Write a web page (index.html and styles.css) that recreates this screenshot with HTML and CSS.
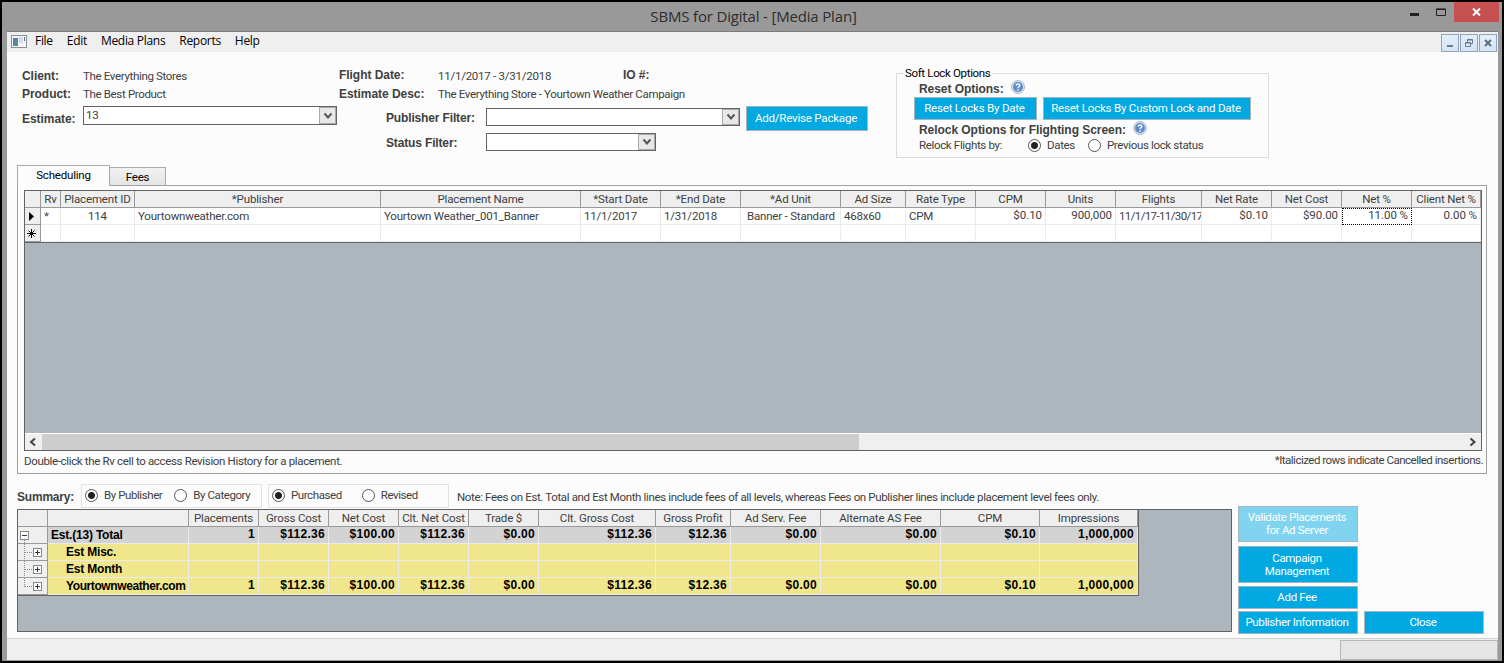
FILE: index.html
```html
<!DOCTYPE html>
<html lang="en">
<head>
  <meta charset="UTF-8" />
  <title>SBMS for Digital - [Media Plan]</title>
  <link rel="stylesheet" href="styles.css">
</head>
<body>
  <div class="window">
    <div class="titlebar">
      <div class="title">SBMS for Digital - [Media Plan]</div>
      <div class="win-buttons">
        <svg class="win-min" width="9" height="3"><rect width="9" height="3" fill="#222"/></svg>
        <svg class="win-max" width="10" height="8"><path d="M.5 1.500h9v6h-9zM0 .9h10" fill="none" stroke="#222"/></svg>
        <div class="win-close"><svg width="9" height="8"><path d="M1 .5l7 7M8 .5l-7 7" stroke="#fff" stroke-width="2"/></svg></div>
      </div>
    </div>

    <div class="menubar">
      <svg class="app-icon" width="16" height="13">
        <rect x=".5" y=".5" width="15" height="12" fill="#f4f6f8" stroke="#8a8f96"/>
        <rect x="2" y="3" width="5" height="8" fill="#4f8f8c"/>
        <rect x="2" y="3" width="5" height="3" fill="#5b7fae"/>
        <rect x="8" y="2" width="4" height="6" fill="#d5dade"/>
        <rect x="13" y="2" width="1" height="4" fill="#4a7a9c"/>
      </svg>
      <span>File</span><span>Edit</span><span>Media Plans</span><span>Reports</span><span>Help</span>
      <div class="mdi-buttons">
        <i><svg width="16" height="16"><path d="M5 11h6" stroke="#6b7c90" stroke-width="2"/></svg></i>
        <i><svg width="16" height="16"><path d="M6.500 7V4.500h5v4H9M6 5h6M4.500 7.500h5v4h-5zM4 8h6" fill="none" stroke="#6b7c90"/></svg></i>
        <i><svg width="16" height="16"><path d="M5 5l6 6M11 5l-6 6" stroke="#5f6d7e" stroke-width="2"/></svg></i>
      </div>
    </div>

    <div class="content">
      <div class="header">
        <div class="client">
          <div class="field"><b>Client:</b><span>The Everything Stores</span></div>
          <div class="field"><b>Product:</b><span>The Best Product</span></div>
          <div class="field estimate"><b>Estimate:</b>
            <div class="combo wide"><span>13</span><em><svg width="10" height="8"><path d="M1.500 1.500l3.500 4 3.500-4" fill="none" stroke="#555" stroke-width="2"/></svg></em></div>
          </div>
        </div>

        <div class="flight">
          <div class="field"><b>Flight Date:</b><span class="dates">11/1/2017 - 3/31/2018</span><b>IO #:</b></div>
          <div class="field"><b>Estimate Desc:</b><span>The Everything Store - Yourtown Weather Campaign</span></div>
          <div class="filter publisher"><b>Publisher Filter:</b>
            <div class="combo wide"><em><svg width="10" height="8"><path d="M1.500 1.500l3.500 4 3.500-4" fill="none" stroke="#555" stroke-width="2"/></svg></em></div>
            <button>Add/Revise Package</button>
          </div>
          <div class="filter"><b>Status Filter:</b>
            <div class="combo"><em><svg width="10" height="8"><path d="M1.500 1.500l3.500 4 3.500-4" fill="none" stroke="#555" stroke-width="2"/></svg></em></div>
          </div>
        </div>

        <fieldset class="softlock">
          <legend>Soft Lock Options</legend>
          <div class="lock-title"><b>Reset Options:</b>
            <svg width="14" height="14"><circle cx="7" cy="7" r="6.500" fill="#d5e0ee" stroke="#a9bcd4"/><circle cx="7" cy="7" r="5" fill="#5c8bc6"/><path d="M5.200 5.700c0-2.300 3.600-2.300 3.600-.2 0 1.300-1.800 1.200-1.800 2.700M7 9.300v1.400" fill="none" stroke="#fff" stroke-width="1.400"/></svg>
          </div>
          <div class="lock-buttons"><button>Reset Locks By Date</button><button>Reset Locks By Custom Lock and Date</button></div>
          <div class="lock-title second"><b>Relock Options for Flighting Screen:</b>
            <svg width="14" height="14"><circle cx="7" cy="7" r="6.500" fill="#d5e0ee" stroke="#a9bcd4"/><circle cx="7" cy="7" r="5" fill="#5c8bc6"/><path d="M5.200 5.700c0-2.300 3.600-2.300 3.600-.2 0 1.300-1.800 1.200-1.800 2.700M7 9.300v1.400" fill="none" stroke="#fff" stroke-width="1.400"/></svg>
          </div>
          <div class="relock"><span>Relock Flights by:</span><i class="radio on"></i><span>Dates</span><i class="radio"></i><span>Previous lock status</span></div>
        </fieldset>
      </div>

      <div class="tabs"><div class="tab active">Scheduling</div><div class="tab">Fees</div></div>
      <div class="panel">
        <div class="schedule">
          <div class="row head"><div></div><div>Rv</div><div>Placement ID</div><div>*Publisher</div><div>Placement Name</div><div>*Start Date</div><div>*End Date</div><div>*Ad Unit</div><div>Ad Size</div><div>Rate Type</div><div>CPM</div><div>Units</div><div>Flights</div><div>Net Rate</div><div>Net Cost</div><div>Net %</div><div>Client Net %</div></div>
          <div class="row">
            <div class="sel"><svg width="6" height="9"><path d="M0 0l5 4.500-5 4.500z"/></svg></div>
            <div>*</div><div class="center">114</div><div>Yourtownweather.com</div><div>Yourtown Weather_001_Banner</div><div>11/1/2017</div><div>1/31/2018</div><div class="unit">Banner - Standard</div><div>468x60</div><div>CPM</div><div class="num">$0.10</div><div class="num">900,000</div><div class="dates-cell">11/1/17-11/30/17</div><div class="num">$0.10</div><div class="num">$90.00</div><div class="num focus">11.00 %</div><div class="num">0.00 %</div>
          </div>
          <div class="row">
            <div class="sel"><svg width="9" height="9"><path d="M4.500 0v9M0 4.500h9M1.500 1.500l6 6M7.500 1.500l-6 6" stroke="#000"/></svg></div>
            <div></div><div></div><div></div><div></div><div></div><div></div><div></div><div></div><div></div><div></div><div></div><div></div><div></div><div></div><div></div><div></div>
          </div>
          <div class="scrollbar">
            <svg width="17" height="16"><path d="M10 4.500l-4 3.500 4 3.500" fill="none" stroke="#444" stroke-width="2"/></svg>
            <div class="thumb"></div>
            <svg class="right" width="17" height="16"><path d="M6.500 4.500l4 3.500-4 3.500" fill="none" stroke="#444" stroke-width="2"/></svg>
          </div>
        </div>
        <div class="hints"><span>Double-click the Rv cell to access Revision History for a placement.</span><span class="hint-right">*Italicized rows indicate Cancelled insertions.</span></div>
      </div>

      <div class="summary-bar">
        <b>Summary:</b>
        <div class="choice"><i class="radio on"></i><span>By Publisher</span><i class="radio"></i><span>By Category</span></div>
        <div class="choice second"><i class="radio on"></i><span>Purchased</span><i class="radio"></i><span>Revised</span></div>
        <span class="note">Note: Fees on Est. Total and Est Month lines include fees of all levels, whereas Fees on Publisher lines include placement level fees only.</span>
      </div>

      <div class="bottom">
        <div class="summary">
          <div class="sum-grid">
            <div class="row head"><div></div><div></div><div>Placements</div><div>Gross Cost</div><div>Net Cost</div><div>Clt. Net Cost</div><div>Trade $</div><div>Clt. Gross Cost</div><div>Gross Profit</div><div>Ad Serv. Fee</div><div>Alternate AS Fee</div><div>CPM</div><div>Impressions</div></div>
            <div class="row total"><div class="tree"><svg width="29" height="17"><path d="M6.500 13v4" stroke="#888" stroke-dasharray="1 1"/><rect x="2.500" y="4.500" width="8" height="8" fill="#fff" stroke="#888"/><path d="M4 8.500h5" stroke="#335"/></svg></div><div class="name">Est.(13) Total</div><div>1</div><div>$112.36</div><div>$100.00</div><div>$112.36</div><div>$0.00</div><div>$112.36</div><div>$12.36</div><div>$0.00</div><div>$0.00</div><div>$0.10</div><div>1,000,000</div></div>
            <div class="row"><div class="tree"><svg width="29" height="17"><path d="M6.500 0v17M7 8.500h8" fill="none" stroke="#888" stroke-dasharray="1 1"/><rect x="15.500" y="4.500" width="8" height="8" fill="#fff" stroke="#888"/><path d="M17 8.500h5M19.500 6v5" stroke="#335"/></svg></div><div class="name">Est Misc.</div><div></div><div></div><div></div><div></div><div></div><div></div><div></div><div></div><div></div><div></div><div></div></div>
            <div class="row"><div class="tree"><svg width="29" height="17"><path d="M6.500 0v17M7 8.500h8" fill="none" stroke="#888" stroke-dasharray="1 1"/><rect x="15.500" y="4.500" width="8" height="8" fill="#fff" stroke="#888"/><path d="M17 8.500h5M19.500 6v5" stroke="#335"/></svg></div><div class="name">Est Month</div><div></div><div></div><div></div><div></div><div></div><div></div><div></div><div></div><div></div><div></div><div></div></div>
            <div class="row"><div class="tree"><svg width="29" height="17"><path d="M6.500 0v9M7 8.500h8" fill="none" stroke="#888" stroke-dasharray="1 1"/><rect x="15.500" y="4.500" width="8" height="8" fill="#fff" stroke="#888"/><path d="M17 8.500h5M19.500 6v5" stroke="#335"/></svg></div><div class="name site">Yourtownweather.com</div><div>1</div><div>$112.36</div><div>$100.00</div><div>$112.36</div><div>$0.00</div><div>$112.36</div><div>$12.36</div><div>$0.00</div><div>$0.00</div><div>$0.10</div><div>1,000,000</div></div>
          </div>
        </div>
        <div class="actions">
          <button class="validate">Validate Placements<br>for Ad Server</button>
          <button class="campaign">Campaign<br>Management</button>
          <button class="add-fee">Add Fee</button>
          <button>Publisher Information</button>
        </div>
        <button class="close">Close</button>
      </div>
    </div>

    <div class="statusbar"><div class="status-panel"></div></div>
  </div>
</body>
</html>
```
FILE: styles.css
```css
* {
  box-sizing: border-box;
}

body {
  margin: 0;
  width: 1504px;
  height: 663px;
  padding: 2px;
  background: #000;
  overflow: hidden;
  font-family: Roboto, "Liberation Sans", sans-serif;
  font-size: 11.5px;
  line-height: 14px;
  letter-spacing: -0.34px;
  color: #404040;
  white-space: nowrap;
}

svg {
  display: block;
  flex: none;
}

b, .sum-grid .row {
  font-family: "Liberation Sans", sans-serif;
  font-size: 12px;
  font-weight: bold;
  letter-spacing: -0.05px;
}

.window {
  width: 1500px;
  height: 659px;
  padding: 0 4px 1px 5px;
  background: #999;
  display: flex;
  flex-direction: column;
}

.titlebar {
  height: 30px;
  display: flex;
  position: relative;
  justify-content: center;
  border-bottom: 1px solid #7a7a7a;
}

.title {
  padding-left: 2px;
  font: 15px/29px "Open Sans", "Noto Sans", sans-serif;
  letter-spacing: -0.17px;
  color: #2d2d2d;
}

.win-buttons {
  position: absolute;
  right: -1px;
  top: 0;
  display: flex;
}

.win-min {
  margin: 11px 17px 0 0;
}

.win-max {
  margin: 6px 8px 0 0;
}

.win-close {
  width: 45px;
  height: 20px;
  padding: 6px 0 0 18px;
  background: #c75050;
}

.menubar {
  height: 20px;
  background: #efefef;
  display: flex;
  align-items: center;
  padding-left: 4px;
  font: 12px/18px "Open Sans", "Noto Sans", sans-serif;
  letter-spacing: -0.3px;
  color: #000;
}

.app-icon {
  margin: 0 8px 2px 0;
}

.menubar span {
  margin-right: 14px;
  padding-bottom: 2px;
}

.mdi-buttons {
  margin: 1px 1px 0 auto;
  display: flex;
  gap: 1px;
}

.mdi-buttons i {
  width: 18px;
  height: 18px;
  border: 1px solid #8fa3bc;
  background: linear-gradient(#e4eefa, #d3e3f5);
}

.content {
  flex: 1;
  background: #fcfcfc;
  padding-left: 10px;
}

.header {
  display: flex;
  height: 113px;
  padding-left: 4px;
}

.client {
  width: 318px;
  padding-top: 15px;
}

.field {
  display: flex;
  height: 18px;
  line-height: 18px;
}

.client .field b {
  width: 62px;
  padding-left: 1px;
}

.client .estimate {
  height: 19px;
  margin-top: 3px;
}

.estimate b {
  padding-top: 4px;
}

.combo {
  width: 170px;
  height: 18px;
  border: 1px solid #636363;
  background: #fff;
  display: flex;
}

.combo.wide {
  width: 254px;
}

.estimate .combo {
  height: 19px;
  padding-left: 2px;
  line-height: 16px;
  letter-spacing: -0.2px;
}

.combo em {
  width: 17px;
  margin-left: auto;
  border: 1px solid #aaa;
  background: #e8e8e8;
  display: flex;
  align-items: center;
  justify-content: center;
}

.flight {
  width: 557px;
  padding-top: 14px;
}

.flight .field b:first-child {
  width: 99px;
}

.flight .dates {
  width: 185px;
  padding-top: 1px;
  letter-spacing: -0.25px;
}

.flight .field:nth-child(2) {
  padding-top: 1px;
}

.filter {
  display: flex;
  align-items: center;
  height: 25px;
  padding-left: 47px;
}

.filter b {
  width: 100px;
  padding-bottom: 2px;
  letter-spacing: -0.15px;
}

.filter.publisher {
  margin-top: 4px;
}

.filter .combo {
  margin-bottom: 3px;
}

.filter button {
  width: 122px;
  height: 25px;
  margin-left: 6px;
}

button {
  padding: 0 2px 0 0;
  border: 1px solid #a5b5bd;
  background: #00a9e2;
  color: #fff;
  font: inherit;
  line-height: 13px;
  letter-spacing: -0.2px;
}

.softlock {
  width: 373px;
  height: 92px;
  margin: 14px 0 0;
  padding: 0 0 0 17px;
  border: 1px solid #dcdcdc;
}

.softlock legend {
  margin-left: -11px;
  padding: 0 2px;
  color: #000;
}

.lock-title {
  display: flex;
  gap: 7px;
  height: 17px;
  padding-left: 5px;
  line-height: 19px;
}

.lock-title.second {
  line-height: 18px;
  padding-top: 1px;
}

.lock-buttons {
  display: flex;
  gap: 6px;
}

.lock-buttons button {
  width: 123px;
  height: 23px;
}

.lock-buttons button + button {
  width: 208px;
}

.relock {
  display: flex;
  align-items: center;
  padding: 1px 0 0 5px;
}

.relock .radio {
  margin: 0 6px 0 26px;
}

.relock .radio + span + .radio {
  margin-left: 13px;
}

.radio {
  width: 13px;
  height: 13px;
  flex: none;
  border: 1px solid #555;
  border-radius: 50%;
  background: #fff;
}

.radio.on {
  background: radial-gradient(circle, #222 3px, #fff 4px);
}

.tabs {
  display: flex;
  align-items: flex-end;
  height: 20px;
  color: #000;
}

.tab {
  width: 56px;
  height: 18px;
  border: 1px solid #aaa;
  border-width: 1px 1px 0 0;
  background: linear-gradient(#f2f2f2, #e4e4e4);
  text-align: center;
  line-height: 18px;
  letter-spacing: -0.2px;
}

.tab.active {
  position: relative;
  width: 93px;
  height: 21px;
  margin-bottom: -1px;
  border-left-width: 1px;
  background: #fcfcfc;
}

.panel {
  width: 1470px;
  height: 289px;
  border: 1px solid #a0a0a0;
  padding: 4px 0 0 6px;
}

.schedule {
  width: 1458px;
  height: 261px;
  border: 1px solid #636363;
  background: #adb5bd;
  display: flex;
  flex-direction: column;
}

.schedule .row {
  display: grid;
  grid-template-columns: 16px 20px 74px 246px 200px 80px 80px 100px 65px 70px 70px 70px 86px 70px 70px 70px 69px;
  height: 17px;
}

.row > div {
  border-right: 1px solid #ebebeb;
  border-bottom: 1px solid #ebebeb;
  padding: 0 3px;
  overflow: hidden;
}

.schedule .row > div {
  background: #fff;
  line-height: 17px;
  letter-spacing: -0.2px;
}

.schedule .row:nth-child(3) {
  height: 18px;
  border-bottom: 1px solid #636363;
}

.row.head > div, .schedule .row.head > div {
  background: #efefef;
  border-color: #999;
  text-align: center;
  line-height: 17px;
  font-family: Roboto, "Liberation Sans", sans-serif;
  font-size: 11.5px;
  font-weight: normal;
  letter-spacing: -0.15px;
  padding: 0;
}

.schedule .row .sel {
  background: #efefef;
  border-color: #999;
  padding: 4px 0 0 4px;
}

.schedule .sel svg[width="9"] {
  margin-left: -2px;
}

.schedule .row .center {
  text-align: center;
}

.schedule .row .num {
  text-align: right;
  line-height: 15px;
  letter-spacing: -0.05px;
}

.schedule .row .unit {
  padding-left: 6px;
}

.schedule .row .dates-cell {
  padding-right: 0;
  letter-spacing: -0.62px;
}

.schedule .row .focus {
  border: 1px dotted #000;
  line-height: 13px;
}

.scrollbar {
  height: 17px;
  margin-top: auto;
  display: flex;
  background: #efefef;
  border-top: 1px solid #fff;
}

.thumb {
  width: 817px;
  background: #cdcdcd;
}

.scrollbar .right {
  margin-left: auto;
}

.hints {
  display: flex;
  justify-content: space-between;
  padding: 3px 3px 0 0;
}

.hint-right {
  margin-top: -1px;
  letter-spacing: -0.5px;
}

.summary-bar {
  display: flex;
  height: 35px;
  padding-top: 10px;
}

.summary-bar b {
  width: 64px;
  padding-top: 6px;
  letter-spacing: -0.2px;
}

.choice {
  width: 181px;
  height: 24px;
  margin-right: 6px;
  padding: 0 0 2px 3px;
  border: 1px solid #e2e2e2;
  display: flex;
  align-items: center;
  letter-spacing: -0.42px;
}

.choice span {
  margin: 0 12px 0 6px;
}

.choice.second span {
  margin-right: 20px;
}

.note {
  margin: 6px 0 0 2px;
  letter-spacing: -0.36px;
}

.bottom {
  display: flex;
}

.summary {
  width: 1215px;
  height: 123px;
  border: 1px solid #636363;
  background: #adb5bd;
}

.sum-grid {
  width: 1121px;
  border: solid #636363;
  border-width: 0 1px 1px 0;
}

.sum-grid .row {
  display: grid;
  grid-template-columns: 30px 141px 70px 70px 70px 70px 70px 117px 75px 90px 120px 99px 98px;
  height: 17px;
  color: #000;
}

.sum-grid .row > div {
  background: #f0e68c;
  text-align: right;
  line-height: 14px;
  letter-spacing: 0.3px;
}

.sum-grid .row.head > div {
  background: #efefef;
  text-align: center;
  line-height: 17px;
  letter-spacing: -0.15px;
  color: #404040;
}

.sum-grid .row.total > div {
  background: #d3d3d3;
}

.sum-grid .row .tree, .sum-grid .row.total .tree {
  background: #efefef;
  border-color: #999;
  padding: 0;
}

.sum-grid .row .name {
  text-align: left;
  padding: 0 0 0 18px;
  line-height: 16px;
  letter-spacing: -0.2px;
}

.sum-grid .row .site {
  letter-spacing: -0.4px;
}

.sum-grid .total .name {
  padding-left: 3px;
}

.actions {
  width: 120px;
  margin: -3px 6px 0;
  display: flex;
  flex-direction: column;
}

.actions button, .close {
  flex: none;
  width: 120px;
  height: 23px;
  letter-spacing: -0.35px;
}

.actions .validate {
  height: 36px;
  margin-bottom: 4px;
  background: #80d4f0;
}

.actions .campaign {
  height: 37px;
  margin-bottom: 3px;
}

.actions .add-fee {
  margin-bottom: 2px;
}

.close {
  margin-top: 102px;
}

.statusbar {
  height: 22px;
  background: #efefef;
  border-top: 1px solid #d0d0d0;
  padding-top: 1px;
}

.status-panel {
  width: 158px;
  height: 20px;
  margin-left: auto;
  border: 1px solid #b8b8b8;
  background: #e5e5e5;
}
```
